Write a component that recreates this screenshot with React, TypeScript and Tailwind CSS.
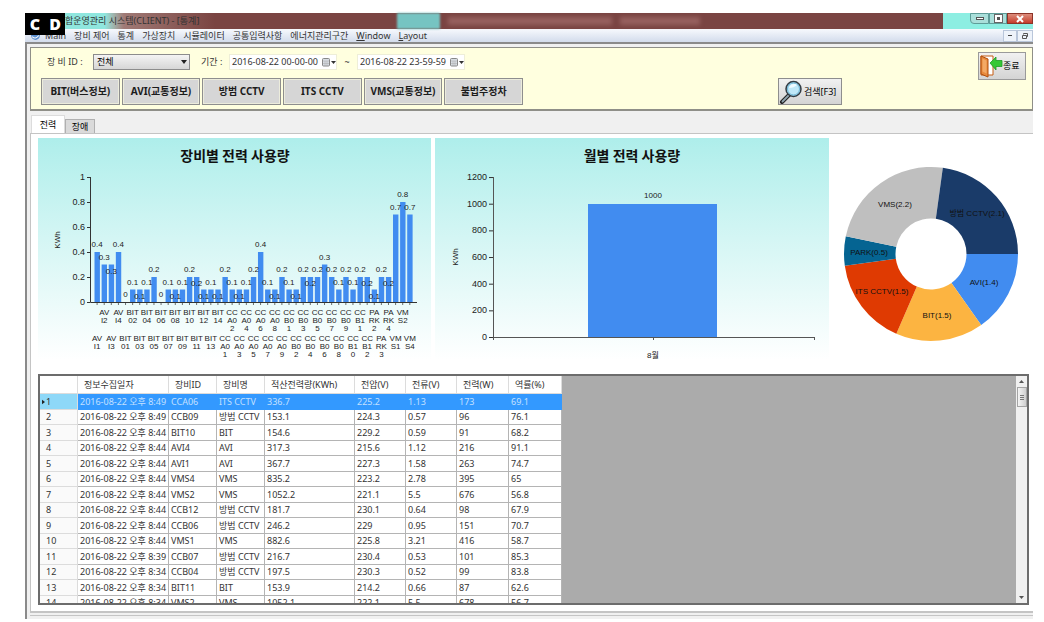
import { useState } from "react"
import clsx from "clsx"

const MENUS = ["장비 제어", "통계", "가상장치", "시뮬레이터", "공통입력사항", "에너지관리구간"]

const DEVICE_BUTTONS = ["BIT(버스정보)", "AVI(교통정보)", "방범 CCTV", "ITS CCTV", "VMS(교통정보)", "불법주정차"]

// label lines, kWh, and whether the value is printed inside the bar
type Bar = [lines: string, value: number, inside?: boolean]

const DEVICE_POWER: Bar[] = [
  ["AV I1", 0.4], ["AV I2", 0.3], ["AV I3", 0.3, true], ["AV I4", 0.4],
  ["BIT 01", 0], ["BIT 02", 0.1], ["BIT 03", 0.1, true], ["BIT 04", 0.1], ["BIT 05", 0.2],
  ["BIT 06", 0], ["BIT 07", 0.1], ["BIT 08", 0.1, true], ["BIT 09", 0.1], ["BIT 10", 0.2],
  ["BIT 11", 0.2, true], ["BIT 12", 0.1, true], ["BIT 13", 0.1], ["BIT 14", 0.1, true],
  ["CC A0 1", 0.2], ["CC A0 2", 0.1], ["CC A0 3", 0.1, true], ["CC A0 4", 0.1], ["CC A0 5", 0.2],
  ["CC A0 6", 0.4], ["CC A0 7", 0.1], ["CC A0 8", 0.1, true], ["CC A0 9", 0.2],
  ["CC B0 1", 0.1], ["CC B0 2", 0.1, true], ["CC B0 3", 0.2], ["CC B0 4", 0.2, true], ["CC B0 5", 0.2],
  ["CC B0 6", 0.3], ["CC B0 7", 0.2], ["CC B0 8", 0.1], ["CC B0 9", 0.2], ["CC B1 0", 0.1],
  ["CC B1 1", 0.2], ["CC B1 2", 0.2, true],
  ["PA RK 2", 0.1, true], ["PA RK 3", 0.2], ["PA RK 4", 0.2, true],
  ["VM S1", 0.7], ["VM S2", 0.8], ["VM S4", 0.7],
]

const SHARES = [
  { label: "AVI(1.4)", value: 1.4, color: "#418cf0", x: 151, y: 144 },
  { label: "BIT(1.5)", value: 1.5, color: "#fcb441", x: 104, y: 177 },
  { label: "ITS CCTV(1.5)", value: 1.5, color: "#df3a02", x: 49, y: 153 },
  { label: "PARK(0.5)", value: 0.5, color: "#056492", x: 36, y: 114 },
  { label: "VMS(2.2)", value: 2.2, color: "#bfbfbf", x: 62, y: 66 },
  { label: "방범 CCTV(2.1)", value: 2.1, color: "#1a3b69", x: 144, y: 75 },
]

const COLUMNS = ["정보수집일자", "장비ID", "장비명", "적산전력량(KWh)", "전압(V)", "전류(V)", "전력(W)", "역률(%)"]

const ROWS = [
  ["2016-08-22 오후 8:49", "CCA06", "ITS CCTV", "336.7", "225.2", "1.13", "173", "69.1"],
  ["2016-08-22 오후 8:49", "CCB09", "방범 CCTV", "153.1", "224.3", "0.57", "96", "76.1"],
  ["2016-08-22 오후 8:44", "BIT10", "BIT", "154.6", "229.2", "0.59", "91", "68.2"],
  ["2016-08-22 오후 8:44", "AVI4", "AVI", "317.3", "215.6", "1.12", "216", "91.1"],
  ["2016-08-22 오후 8:44", "AVI1", "AVI", "367.7", "227.3", "1.58", "263", "74.7"],
  ["2016-08-22 오후 8:44", "VMS4", "VMS", "835.2", "223.2", "2.78", "395", "65"],
  ["2016-08-22 오후 8:44", "VMS2", "VMS", "1052.2", "221.1", "5.5", "676", "56.8"],
  ["2016-08-22 오후 8:44", "CCB12", "방범 CCTV", "181.7", "230.1", "0.64", "98", "67.9"],
  ["2016-08-22 오후 8:44", "CCB06", "방범 CCTV", "246.2", "229", "0.95", "151", "70.7"],
  ["2016-08-22 오후 8:44", "VMS1", "VMS", "882.6", "225.8", "3.21", "416", "58.7"],
  ["2016-08-22 오후 8:39", "CCB07", "방범 CCTV", "216.7", "230.4", "0.53", "101", "85.3"],
  ["2016-08-22 오후 8:34", "CCB04", "방범 CCTV", "197.5", "230.3", "0.52", "99", "83.8"],
  ["2016-08-22 오후 8:34", "BIT11", "BIT", "153.9", "214.2", "0.66", "87", "62.6"],
  ["2016-08-22 오후 8:34", "VMS2", "VMS", "1052.1", "222.1", "5.5", "678", "56.7"],
]

const CHART_FONT = "font-['Liberation_Sans','Noto_Sans_CJK_KR',sans-serif]"

function TitleBar() {
  return (
    <header className="relative flex h-4 items-start bg-[#7a4442]">
      <div className="flex h-full w-[190px] items-center bg-linear-to-r from-[#8fe6de] from-42% via-[#a07a76] via-52% to-[#7a4442] pl-10 text-[9px] whitespace-nowrap text-[#333]">
        합운영관리 시스템(CLIENT) - [통계]
      </div>
      {/* whatever lies behind the glass frame */}
      <div className="ml-[182px] h-full w-[43px] bg-[#76c4c2] blur-[1px]" />
      <div className="ml-2 flex h-full items-center gap-2 blur-[2px]">
        <span className="h-2 w-[164px] bg-[#96605e]" />
        <span className="h-2 w-20 bg-[#96605e]" />
      </div>
      <div className="ml-auto flex h-full w-[90px] items-start justify-end bg-[#8deee2]">
        <button aria-label="최소화" className="flex h-[11px] w-[19px] items-center justify-center rounded-bl border border-[#5f9c98] bg-[#a9dfda]">
          <span className="h-[3px] w-2 border border-[#555] bg-white" />
        </button>
        <button aria-label="최대화" className="flex h-[11px] w-[18px] items-center justify-center border border-[#5f9c98] bg-[#a9dfda]">
          <span className="size-[7px] border-2 border-white bg-[#555] outline outline-[#666]" />
        </button>
        <button aria-label="닫기" className="flex h-[11px] w-[26px] items-center justify-center border border-[#8c3327] bg-linear-to-b from-[#dc8d7c] to-[#c5392a]">
          <svg viewBox="0 0 8 8" className="size-2">
            <path d="M1 1l6 6M7 1l-6 6" stroke="#fff" strokeWidth="2" />
          </svg>
        </button>
      </div>
      <div className="absolute top-0 left-0 z-10 flex font-['Open_Sans','Noto_Sans',sans-serif] text-[16px] leading-[22px] font-extrabold text-white">
        <span className="w-5 bg-black text-center">C</span>
        <span className="w-5 bg-black text-center">D</span>
      </div>
    </header>
  )
}

function MenuBar() {
  return (
    <nav className="flex h-[13px] items-center gap-2 bg-linear-to-b from-[#f7f9fd] to-[#d3dcec] pl-[5px] text-[9px] leading-[13px] whitespace-nowrap text-[#333]">
      <svg viewBox="0 0 10 10" className="-mr-1 size-[11px]">
        <circle cx="5" cy="5" r="4" fill="#5b8fd0" />
        <path d="M2 6q3 3 6-1" stroke="#fff" fill="none" />
      </svg>
      <button>Main</button>
      {MENUS.map((m) => (
        <button key={m}>{m}</button>
      ))}
      <button><u>W</u>indow</button>
      <button><u>L</u>ayout</button>
      <div className="ml-auto flex">
        <button aria-label="창 최소화" className="flex h-3 w-[14px] items-center justify-center border border-[#b9c6da] bg-[#eef3fa]">
          <span className="h-px w-1 bg-[#444]" />
        </button>
        <button aria-label="창 복원" className="flex h-3 w-4 items-center justify-center border border-[#b9c6da] bg-[#eef3fa]">
          <svg viewBox="0 0 8 8" className="size-2" fill="none" stroke="#555">
            <path d="M2.5 2.5v-1h4v3h-1M1.5 3.5h4v3h-4z" />
          </svg>
        </button>
      </div>
    </nav>
  )
}

function DateField({ label, value }: { label: string; value: string }) {
  return (
    <div className="flex h-4 w-[108px] items-center border border-[#eeeed8] bg-white pl-[2px]">
      <input aria-label={label} defaultValue={value} className="w-full min-w-0 flex-1 bg-transparent text-[9px] text-[#333] outline-none" />
      <svg viewBox="0 0 14 9" className="h-[9px] w-[14px] shrink-0">
        <rect x=".5" y=".5" width="7" height="7.5" rx="1" fill="#d8dde3" stroke="#888" />
        <path d="M1 3h6M3 3v5M5 3v5M1 5.5h6" stroke="#aaa" strokeWidth=".5" />
        <path d="M9 3h5l-2.500 3z" fill="#333" />
      </svg>
    </div>
  )
}

function SearchIcon() {
  return (
    <svg viewBox="0 0 24 24" className="size-6 shrink-0">
      <path d="M10 15l-7 7" stroke="#222" strokeWidth="4" strokeLinecap="round" />
      <path d="M9.500 15.500l-6 6" stroke="#8fa3ad" strokeWidth="1.800" strokeLinecap="round" />
      <circle cx="14.500" cy="9" r="7.500" fill="#a5dcf2" stroke="#333c44" strokeWidth="1.500" />
      <circle cx="14.500" cy="9" r="6" fill="#bfe8f8" stroke="#6fb5d4" />
      <path d="M10 8a5 5 0 0 1 8-3q-3 3-8 3z" fill="#eefaff" />
    </svg>
  )
}

function ExitIcon() {
  return (
    <svg viewBox="0 0 24 24" className="size-6 shrink-0">
      <path d="M2 2h12v19H2z" fill="#fff" stroke="#c65d12" />
      <path d="M2 2l7 3v18l-7-3z" fill="#e88a3c" stroke="#b04e0c" />
      <path d="M3.500 4.500l4 2v13l-4-2z" fill="#f3a965" />
      <path d="M11 9l6-6v3.500h6v6h-6V16z" fill="#35c835" stroke="#1f9a26" strokeWidth=".8" />
    </svg>
  )
}

function FilterPanel() {
  return (
    <section className="flex items-start border border-b-2 border-[#8f8f88] bg-[#ffffdf] pt-1 pb-[4px] pl-[10px]">
      <div className="pt-[2px]">
        <div className="flex h-4 items-center pl-[6px] text-[9px] whitespace-nowrap text-[#333]">
          <label htmlFor="device" className="w-[46px]">장 비 ID :</label>
          <div className="relative w-[97px]">
            <select id="device" className="block h-4 w-full appearance-none border border-[#8c8c8c] bg-linear-to-b from-[#f4f4f4] to-[#d6d6d6] pl-[3px] text-[9px] leading-[14px] text-black">
              <option>전체</option>
            </select>
            <svg viewBox="0 0 6 4" className="pointer-events-none absolute top-[6px] right-[3px] h-1 w-[6px]">
              <path d="M0 0h6l-3 4z" fill="#222" />
            </svg>
          </div>
          <span className="ml-[11px] w-7">기간 :</span>
          <DateField label="시작" value="2016-08-22 00-00-00" />
          <span className="w-5 text-center">~</span>
          <DateField label="종료" value="2016-08-22 23-59-59" />
        </div>
        <div className="mt-2 flex">
          <div className="grid w-[482px] grid-cols-6 gap-[2px]">
            {DEVICE_BUTTONS.map((b) => (
              <button key={b} className="h-[27px] border border-[#8e8e8e] bg-[#d6d6d6] text-[10px] font-bold whitespace-nowrap text-[#1c1c1c] ring-1 ring-[#ececdc] ring-inset">
                {b}
              </button>
            ))}
          </div>
          <button className="ml-[255px] flex h-[27px] w-16 items-center border border-[#8e8e8e] bg-linear-to-b from-[#f1f1f1] to-[#d4d4d4] text-[9px] whitespace-nowrap">
            <SearchIcon />
            <span className="pl-px">검색[F3]</span>
          </button>
        </div>
      </div>
      <button className="mr-[6px] ml-auto flex h-7 w-12 items-center border border-[#9a9a9a] bg-linear-to-b from-[#f1f1f1] to-[#d4d4d4] text-[9px] whitespace-nowrap">
        <ExitIcon />
        종료
      </button>
    </section>
  )
}

function DeviceChart() {
  const x0 = 52
  const base = 164
  const scale = 125
  const pitch = 7.107
  return (
    <svg viewBox="0 0 393 222" className={clsx("block w-full bg-linear-to-b from-[#aeeeeb] to-white", CHART_FONT)} textAnchor="middle">
      <text x="197" y="23" className="font-['Noto_Sans_CJK_KR',sans-serif] text-[14px] font-bold" fill="#111">장비별 전력 사용량</text>
      <text transform="translate(22 102) rotate(-90)" className="text-[8px]" fill="#222">KWh</text>
      {[0, 0.2, 0.4, 0.6, 0.8, 1].map((v) => (
        <g key={v}>
          <path d={`M${x0 - 3} ${base - v * scale + 0.5}h3`} stroke="#333" />
          <text x={x0 - 5} y={base - v * scale + 3} textAnchor="end" className="text-[9px]" fill="#222">{v}</text>
        </g>
      ))}
      {DEVICE_POWER.map(([, v], i) => (
        <rect key={i} x={x0 + (i + 1) * pitch - 2.6} y={base - v * scale} width="5.4" height={v * scale} fill="#418cf0" />
      ))}
      <path d={`M${x0 + 0.5} 39V${base + 0.5}H379`} fill="none" stroke="#333" />
      {DEVICE_POWER.map(([label, v, inside], i) => {
        const x = x0 + (i + 1) * pitch
        return (
          <g key={label} className="text-[8px]" fill="#222">
            <path d={`M${x} ${base}v3`} stroke="#333" strokeWidth=".7" />
            <text x={x} y={base - v * scale + (inside ? 9 : -5)}>{v}</text>
            {label.split(" ").map((line, n) => (
              <text key={n} x={x} y={(i % 2 ? 177 : 203) + n * 8}>{line}</text>
            ))}
          </g>
        )
      })}
    </svg>
  )
}

function MonthChart() {
  const base = 199
  return (
    <svg viewBox="0 0 394 222" className={clsx("block w-full bg-linear-to-b from-[#aeeeeb] to-white", CHART_FONT)} textAnchor="middle">
      <text x="197" y="23" className="font-['Noto_Sans_CJK_KR',sans-serif] text-[14px] font-bold" fill="#111">월별 전력 사용량</text>
      <text transform="translate(23 119) rotate(-90)" className="text-[8px]" fill="#222">KWh</text>
      {[0, 200, 400, 600, 800, 1000, 1200].map((v) => (
        <g key={v}>
          <path d={`M54 ${base - v * 0.1333 + 0.5}h4`} stroke="#333" />
          <text x="52" y={base - v * 0.1333 + 3} textAnchor="end" className="text-[9px]" fill="#222">{v}</text>
        </g>
      ))}
      <rect x="153" y="66" width="129" height="133" fill="#418cf0" />
      <path d="M58.5 39V199.5H380M218.5 199v3M379.5 199v3M58.5 199v3" fill="none" stroke="#555" />
      <text x="218" y="60" className="text-[8px]" fill="#222">1000</text>
      <text x="218" y="220" className="text-[8px]" fill="#222">8월</text>
    </svg>
  )
}

function ShareChart() {
  const cx = 98
  const cy = 116
  const total = SHARES.reduce((sum, s) => sum + s.value, 0)
  const at = (r: number, a: number) => `${cx + r * Math.cos(a)} ${cy + r * Math.sin(a)}`
  let angle = 0
  return (
    <svg viewBox="0 0 196 222" className={clsx("block w-full", CHART_FONT)} textAnchor="middle">
      {SHARES.map((s) => {
        const a = angle
        const b = (angle += (s.value / total) * Math.PI * 2)
        return <path key={s.label} d={`M${at(87, a)}A87 87 0 0 1 ${at(87, b)}L${at(35.5, b)}A35.5 35.5 0 0 0 ${at(35.5, a)}z`} fill={s.color} />
      })}
      {SHARES.map((s) => (
        <text key={s.label} x={s.x} y={s.y + 3} className="text-[8px]" fill="#111">{s.label}</text>
      ))}
    </svg>
  )
}

function DataGrid() {
  return (
    <div className="mt-[14px] flex h-[231px] overflow-hidden border-2 border-[#6c6c6c] bg-[#ababab]">
      <table className="w-[522px] shrink-0 table-fixed border-separate border-spacing-0 self-start bg-white text-[9px] leading-[10px] whitespace-nowrap text-[#333]">
        <colgroup>
          <col className="w-[38px]" />
          <col className="w-[91px]" />
          <col className="w-12" />
          <col className="w-12" />
          <col className="w-[90px]" />
          <col className="w-[51px]" />
          <col className="w-[51px]" />
          <col className="w-[52px]" />
          <col className="w-[53px]" />
        </colgroup>
        <thead>
          <tr className="h-[18px]">
            <th className="border-r border-b border-[#dcdcdc] p-0" />
            {COLUMNS.map((c) => (
              <th key={c} className="border-r border-b border-[#dcdcdc] p-0 pl-[6px] text-left font-normal">{c}</th>
            ))}
          </tr>
        </thead>
        <tbody>
          {ROWS.map((row, i) => (
            <tr key={i} className={clsx("odd:h-4 even:h-[15px]", i === 0 && "bg-[#3399ff] text-[#c4e0ff]")}>
              <th scope="row" className={clsx("border-r border-b border-[#dcdcdc] p-0 text-left font-normal text-[#333]", i === 0 ? "bg-[#8ed8f8] pl-[2px]" : "bg-[#fafafa] pl-[6px]")}>
                {i === 0 && (
                  <svg viewBox="0 0 4 6" className="mr-px inline-block h-[6px] w-[3px] align-baseline"><path d="M0 0l4 3-4 3z" fill="#222" /></svg>
                )}
                {i + 1}
              </th>
              {row.map((cell, n) => (
                <td key={n} className={clsx("border-r border-b p-0 pl-[2px]", i === 0 ? "border-[#3399ff]" : "border-[#b4b4b4]")}>{cell}</td>
              ))}
            </tr>
          ))}
        </tbody>
      </table>
      <div className="ml-auto flex w-[11px] flex-col items-center bg-[#f0f0f0] py-1">
        <svg viewBox="0 0 5 3" className="h-[3px] w-[5px]"><path d="M0 3h5l-2.500-3z" fill="#555" /></svg>
        <div className="mt-1 flex h-5 w-[10px] flex-col items-center justify-center gap-px border border-[#a5a5a5] bg-linear-to-r from-[#f5f5f5] to-[#cfcfcf]">
          <span className="h-px w-1 bg-[#777]" />
          <span className="h-px w-1 bg-[#777]" />
          <span className="h-px w-1 bg-[#777]" />
        </div>
        <svg viewBox="0 0 5 3" className="mt-auto h-[3px] w-[5px]"><path d="M0 0h5l-2.500 3z" fill="#555" /></svg>
      </div>
    </div>
  )
}

export default function App() {
  const [tab, setTab] = useState("전력")
  return (
    <div className="bg-white pt-[13px] pr-[11px] pb-[3px] pl-[25px] font-['Noto_Sans','Noto_Sans_CJK_KR',sans-serif]">
      <TitleBar />
      <MenuBar />
      <main className="border-t-2 border-l-2 border-[#8a8a8a] bg-[#f0f0f0] pt-[3px] pl-[3px]">
        <FilterPanel />
        <div role="tablist" className="mt-[2px] flex h-5 items-end pl-px text-[9px]">
          {["전력", "장애"].map((t) => (
            <button
              key={t}
              role="tab"
              aria-selected={tab === t}
              onClick={() => setTab(t)}
              className={clsx(
                "border border-b-0",
                tab === t ? "h-[18px] w-[34px] border-[#dcdcdc] bg-white" : "h-[14px] w-[30px] border-[#b0b0b0] bg-[#dadada]",
              )}
            >
              {t}
            </button>
          ))}
        </div>
        <div role="tabpanel" className="border-t border-b-2 border-l border-[#c4c4c4] bg-white pt-1 pr-1 pb-[6px] pl-[7px]">
          <div className="grid grid-cols-[393fr_394fr_196fr] gap-x-1">
            <DeviceChart />
            <MonthChart />
            <ShareChart />
          </div>
          <DataGrid />
        </div>
        <div className="mt-[2px] h-1 border-t border-[#c4c4c4]" />
      </main>
    </div>
  )
}
